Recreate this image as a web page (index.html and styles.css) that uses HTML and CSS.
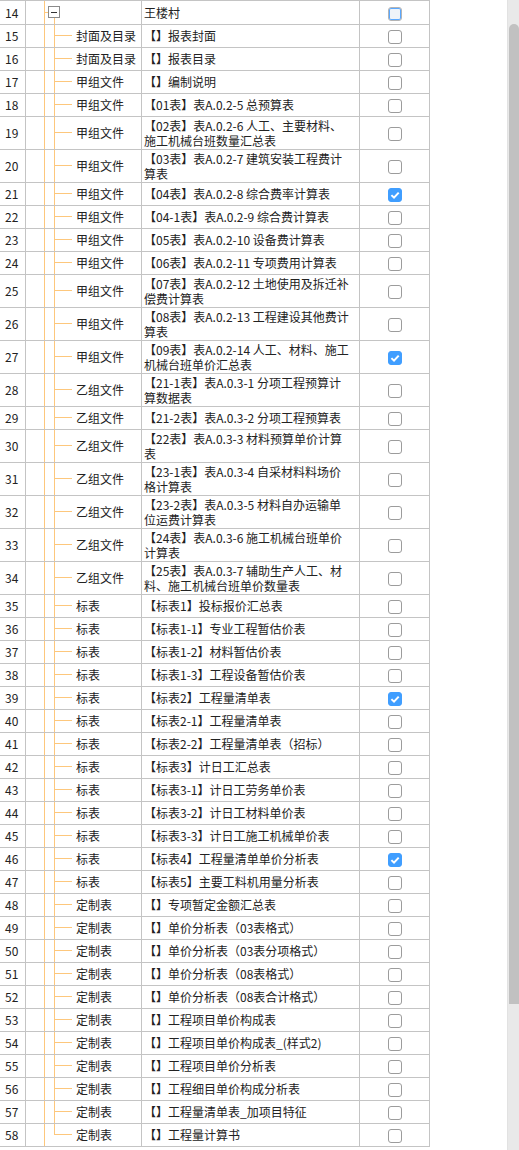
FILE: index.html
```html
<!DOCTYPE html>
<html lang="zh-CN">
<head>
    <meta charset="UTF-8">
    <meta name="viewport" content="width=device-width, initial-scale=1.0">
    <title>报表选择</title>
    <link rel="stylesheet" href="styles.css">
</head>
<body>
    <div class="page">
        <div class="grid">
            <table id="report-table">
                <tbody>
                    <tr class="root">
                        <td class="num">14</td>
                        <td class="tree tree-root">
                            <svg class="fold" width="12" height="12" viewBox="0 0 12 12">
                                <rect x="0.5" y="0.5" width="11" height="11" fill="#fff" stroke="#8a8a8a"/>
                                <path d="M3 6.5h6" stroke="#333" stroke-width="1"/>
                            </svg>
                        </td>
                        <td class="name">王楼村</td>
                        <td class="chk"><span class="cb cb-focus"></span></td>
                    </tr>
                </tbody>
            </table>
        </div>
        <div class="scrollbar">
            <div class="thumb"></div>
        </div>
    </div>

    <script>
        // Список отчётов (как в дереве)
        const reports = [
            [15, '封面及目录', ['【】报表封面']],
            [16, '封面及目录', ['【】报表目录']],
            [17, '甲组文件', ['【】编制说明']],
            [18, '甲组文件', ['【01表】表A.0.2-5 总预算表']],
            [19, '甲组文件', ['【02表】表A.0.2-6 人工、主要材料、', '施工机械台班数量汇总表']],
            [20, '甲组文件', ['【03表】表A.0.2-7 建筑安装工程费计', '算表']],
            [21, '甲组文件', ['【04表】表A.0.2-8 综合费率计算表'], true],
            [22, '甲组文件', ['【04-1表】表A.0.2-9 综合费计算表']],
            [23, '甲组文件', ['【05表】表A.0.2-10 设备费计算表']],
            [24, '甲组文件', ['【06表】表A.0.2-11 专项费用计算表']],
            [25, '甲组文件', ['【07表】表A.0.2-12 土地使用及拆迁补', '偿费计算表']],
            [26, '甲组文件', ['【08表】表A.0.2-13 工程建设其他费计', '算表']],
            [27, '甲组文件', ['【09表】表A.0.2-14 人工、材料、施工', '机械台班单价汇总表'], true],
            [28, '乙组文件', ['【21-1表】表A.0.3-1 分项工程预算计', '算数据表']],
            [29, '乙组文件', ['【21-2表】表A.0.3-2 分项工程预算表']],
            [30, '乙组文件', ['【22表】表A.0.3-3 材料预算单价计算', '表']],
            [31, '乙组文件', ['【23-1表】表A.0.3-4 自采材料料场价', '格计算表']],
            [32, '乙组文件', ['【23-2表】表A.0.3-5 材料自办运输单', '位运费计算表']],
            [33, '乙组文件', ['【24表】表A.0.3-6 施工机械台班单价', '计算表']],
            [34, '乙组文件', ['【25表】表A.0.3-7 辅助生产人工、材', '料、施工机械台班单价数量表']],
            [35, '标表', ['【标表1】投标报价汇总表']],
            [36, '标表', ['【标表1-1】专业工程暂估价表']],
            [37, '标表', ['【标表1-2】材料暂估价表']],
            [38, '标表', ['【标表1-3】工程设备暂估价表']],
            [39, '标表', ['【标表2】工程量清单表'], true],
            [40, '标表', ['【标表2-1】工程量清单表']],
            [41, '标表', ['【标表2-2】工程量清单表（招标）']],
            [42, '标表', ['【标表3】计日工汇总表']],
            [43, '标表', ['【标表3-1】计日工劳务单价表']],
            [44, '标表', ['【标表3-2】计日工材料单价表']],
            [45, '标表', ['【标表3-3】计日工施工机械单价表']],
            [46, '标表', ['【标表4】工程量清单单价分析表'], true],
            [47, '标表', ['【标表5】主要工料机用量分析表']],
            [48, '定制表', ['【】专项暂定金额汇总表']],
            [49, '定制表', ['【】单价分析表（03表格式）']],
            [50, '定制表', ['【】单价分析表（03表分项格式）']],
            [51, '定制表', ['【】单价分析表（08表格式）']],
            [52, '定制表', ['【】单价分析表（08表合计格式）']],
            [53, '定制表', ['【】工程项目单价构成表']],
            [54, '定制表', ['【】工程项目单价构成表_(样式2)']],
            [55, '定制表', ['【】工程项目单价分析表']],
            [56, '定制表', ['【】工程细目单价构成分析表']],
            [57, '定制表', ['【】工程量清单表_加项目特征']],
            [58, '定制表', ['【】工程量计算书']]
        ];

        const tick = '<svg width="14" height="14" viewBox="0 0 14 14"><path d="M3.4 7.1 6 9.6 10.7 4.6" fill="none" stroke="#fff" stroke-width="2"/></svg>';

        const tableBody = document.querySelector('#report-table tbody');
        reports.forEach(([no, group, lines, checked], i) => {
            const row = document.createElement('tr');
            if (lines.length > 1) row.className = 'two';
            const last = i === reports.length - 1 ? ' last' : '';
            row.innerHTML = `
                <td class="num">${no}</td>
                <td class="tree${last}">${group}</td>
                <td class="name">${lines.join('<br>')}</td>
                <td class="chk"><span class="cb${checked ? ' cb-on' : ''}">${checked ? tick : ''}</span></td>
            `;
            tableBody.appendChild(row);
        });
    </script>
</body>
</html>
```

FILE: styles.css
```css
body {
    margin: 0;
    font-family: "Noto Sans CJK SC", "Liberation Sans", sans-serif;
    font-size: 12px;
    color: #222;
    background-color: #fff;
    overflow: hidden;
}
.page {
    display: flex;
    height: 1150px;
}
.grid {
    flex: 1;
}
table {
    border-collapse: separate;
    border-spacing: 0;
    table-layout: fixed;
    width: 430px;
    border-top: 1px solid #c4c4c4;
}
td {
    box-sizing: border-box;
    height: 23px;
    padding: 0 0 1px;
    border-right: 1px solid #c4c4c4;
    border-bottom: 1px solid #c4c4c4;
    white-space: nowrap;
    overflow: hidden;
    vertical-align: middle;
    line-height: 15px;
}
tr.root td {
    height: 24px;
}
tr.two td {
    height: 33px;
}
.num {
    width: 26px;
    padding-left: 5px;
}
.tree {
    width: 116px;
    padding-left: 50px;
    background-image:
        linear-gradient(#fdc77c, #fdc77c),
        linear-gradient(#fdc77c, #fdc77c),
        linear-gradient(#fdc77c, #fdc77c);
    background-repeat: no-repeat;
    background-size: 1px 100%, 1px 100%, 18px 1px;
    background-position: 18px 0, 28px 0, 28px 10px;
}
tr.two .tree {
    background-position: 18px 0, 28px 0, 28px 15px;
}
.tree.last {
    background-size: 1px 100%, 1px 11px, 18px 1px;
}
.tree-root {
    padding-left: 22px;
    background-size: 1px 100%, 1px 100%, 4px 1px;
    background-position: 18px 0, 28px 17px, 18px 11px;
}
.fold {
    display: block;
}
.name {
    width: 218px;
    padding-left: 2px;
}
.chk {
    width: 70px;
    padding: 0;
    text-align: center;
}
.cb {
    display: inline-block;
    box-sizing: border-box;
    width: 14px;
    height: 14px;
    border: 1px solid #9c9c9c;
    border-radius: 3px;
    background-color: #fff;
    vertical-align: middle;
}
.cb svg {
    display: block;
    margin: -1px;
}
.cb-on {
    background-color: #409eff;
    border-color: #409eff;
}
.cb-focus {
    border-color: #b4b4b4;
    box-shadow: inset 0 0 0 1px #5aa8ff;
    background-color: #eef3f9;
}
.scrollbar {
    width: 12px;
    box-sizing: border-box;
    padding-top: 24px;
    background-color: #e9e9e9;
    border-left: 1px solid #e2e2e2;
}
.thumb {
    margin-left: 1px;
    height: 980px;
    background-color: #c1c1c1;
    border-radius: 5px 5px 0 0;
}
```
